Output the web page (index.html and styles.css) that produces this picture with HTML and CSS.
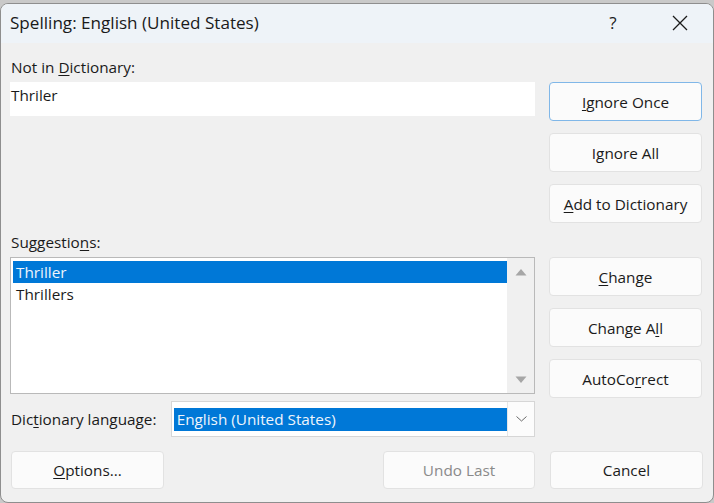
FILE: index.html
```html
<!DOCTYPE html>
<html lang="en">

<head>
    <meta charset="UTF-8">
    <title>Spelling: English (United States)</title>
    <link rel="stylesheet" href="styles.css">
</head>

<body>
    <div class="window">
        <div class="titlebar">
            <span class="title">Spelling: English (United States)</span>
            <span class="help">?</span>
            <span class="close">
                <svg width="16" height="16" viewBox="0 0 16 16">
                    <path d="M1 1 L15 15 M15 1 L1 15" stroke="#1a1a1a" stroke-width="1.3" fill="none" />
                </svg>
            </span>
        </div>

        <div class="content">
            <div class="main">
                <div class="left">
                    <div class="label first">Not in <u>D</u>ictionary:</div>
                    <div class="textbox">Thriler</div>

                    <div class="label sugg">Suggestio<u>n</u>s:</div>
                    <div class="listbox">
                        <ul class="items">
                            <li class="selected">Thriller</li>
                            <li>Thrillers</li>
                        </ul>
                        <div class="scrollbar">
                            <svg width="12" height="8" viewBox="0 0 12 8">
                                <path d="M0.5 7.5 L6 1 L11.5 7.5 Z" fill="#a6a6a6" />
                            </svg>
                            <svg width="12" height="8" viewBox="0 0 12 8">
                                <path d="M0.5 0.5 L6 7 L11.5 0.5 Z" fill="#a6a6a6" />
                            </svg>
                        </div>
                    </div>

                    <div class="lang-row">
                        <span class="lang-label">Dic<u>t</u>ionary language:</span>
                        <div class="combo">
                            <div class="combo-value">English (United States)</div>
                            <div class="combo-btn">
                                <svg width="11" height="6" viewBox="0 0 11 6">
                                    <path d="M0.5 0.5 L5.5 5 L10.5 0.5" stroke="#6a6a6a" stroke-width="1" fill="none" />
                                </svg>
                            </div>
                        </div>
                    </div>
                </div>

                <div class="right">
                    <button class="btn focused"><u>I</u>gnore Once</button>
                    <button class="btn">I<u>g</u>nore All</button>
                    <button class="btn"><u>A</u>dd to Dictionary</button>
                    <button class="btn group-start"><u>C</u>hange</button>
                    <button class="btn">Change A<u>l</u>l</button>
                    <button class="btn">AutoCo<u>r</u>rect</button>
                </div>
            </div>

            <div class="footer">
                <button class="btn options"><u>O</u>ptions...</button>
                <div class="footer-right">
                    <button class="btn disabled">Undo Last</button>
                    <button class="btn">Cancel</button>
                </div>
            </div>
        </div>
    </div>
</body>

</html>
```

FILE: styles.css
```css
html,
body {
    margin: 0;
    padding: 0;
    background: #c9c9c9;
}

body {
    font-family: "Open Sans", "Noto Sans", sans-serif;
    font-size: 15.3px;
    color: #1a1a1a;
    width: 714px;
    height: 503px;
    overflow: hidden;
}

.window {
    box-sizing: border-box;
    margin-top: 3px;
    height: 500px;
    background: #f0f0f0;
    border: 1px solid #8e8e8e;
    border-radius: 8px;
    overflow: hidden;
}

.titlebar {
    height: 39px;
    background: #eef3f8;
    display: flex;
    align-items: center;
    padding-left: 9px;
}

.title {
    font-size: 17.1px;
    flex: 1;
    margin-top: -2px;
}

.help {
    font-size: 17px;
    width: 30px;
    margin-right: 44px;
    margin-top: -2px;
    text-align: center;
}

.close {
    width: 16px;
    height: 16px;
    margin-right: 25px;
    margin-top: -2px;
    display: flex;
}

.content {
    padding: 0 10px 0 9px;
}

.main {
    display: grid;
    grid-template-columns: 525px 153px;
    column-gap: 14px;
    align-items: start;
}

.label {
    line-height: 20px;
    padding-left: 1px;
}

.label.first {
    margin-top: 14px;
}

.label.sugg {
    margin-top: 116px;
}

u {
    text-underline-offset: 2px;
}

.textbox {
    margin-top: 5px;
    height: 34px;
    box-sizing: border-box;
    background: #fff;
    padding: 3px 1px;
    line-height: 20px;
}

.listbox {
    margin-top: 5px;
    height: 137px;
    box-sizing: border-box;
    border: 1px solid #b9b9b9;
    display: flex;
    background: #fff;
}

.items {
    list-style: none;
    margin: 0;
    padding: 3px 0 0 2px;
    flex: 1;
}

.items li {
    height: 22px;
    line-height: 22px;
    padding-left: 3px;
}

.items li.selected {
    background: #0078d7;
    color: #eef5fc;
}

.scrollbar {
    width: 27px;
    background: #f0f0f0;
    display: flex;
    flex-direction: column;
    justify-content: space-between;
    align-items: center;
    padding: 10px 0 9px;
    box-sizing: border-box;
}

.lang-row {
    margin-top: 7px;
    display: flex;
    align-items: center;
}

.lang-label {
    width: 160px;
    padding-left: 1px;
}

.combo {
    width: 365px;
    height: 36px;
    box-sizing: border-box;
    border: 1px solid #d6d6d6;
    background: #fff;
    display: flex;
    align-items: center;
    padding-left: 2px;
}

.combo-value {
    flex: 1;
    height: 23px;
    line-height: 23px;
    background: #0078d7;
    color: #eef5fc;
    padding-left: 3px;
}

.combo-btn {
    width: 26px;
    height: 34px;
    border-left: 1px solid #e6e6e6;
    display: flex;
    align-items: center;
    justify-content: center;
    background: #fcfcfc;
}

.right {
    display: flex;
    flex-direction: column;
    gap: 12px;
    padding-top: 39px;
}

.btn {
    font-family: inherit;
    font-size: 15.3px;
    color: #1a1a1a;
    width: 153px;
    height: 39px;
    box-sizing: border-box;
    background: #fbfbfb;
    border: 1px solid #e2e2e2;
    border-radius: 4px;
    padding: 0;
}

.btn.focused {
    border-color: #80b7e8;
}

.btn.group-start {
    margin-top: 22px;
}

.btn.disabled {
    color: #8a8a8a;
}

.footer {
    margin-top: 14px;
    display: flex;
    justify-content: space-between;
    padding-left: 1px;
}

.footer-right {
    display: flex;
    gap: 15px;
}

.footer-right .btn.disabled {
    width: 152px;
}

.footer .btn {
    height: 38px;
}
```
